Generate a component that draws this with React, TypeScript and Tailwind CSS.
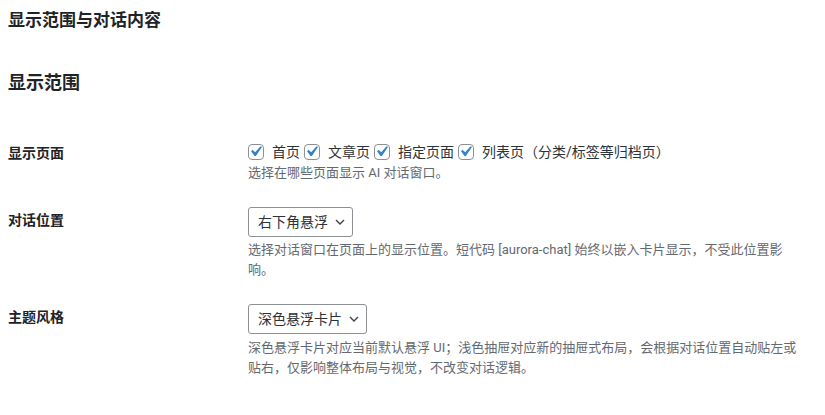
import React from "react";

const font = {
  fontFamily: '"Segoe UI", Roboto, "Noto Sans CJK SC", sans-serif',
};

function Check({ label }: { label: string }) {
  return (
    <label className="inline-flex items-center mr-[4px] text-[14px] leading-[22px] text-[#2c3338]">
      <span className="relative w-4 h-4 mr-[8px] shrink-0 rounded-[4px] border border-[#8c8f94] bg-white">
        <svg
          viewBox="0 0 20 20"
          className="absolute left-[-4px] top-[-4px] w-[21px] h-[21px]"
        >
          <path
            d="M14.83 4.89l1.34.94-5.81 8.38H9.02L5.78 9.67l1.34-1.25 2.57 2.4z"
            fill="#3582c4"
          />
        </svg>
      </span>
      {label}
    </label>
  );
}

function Select({ value }: { value: string }) {
  return (
    <div className="inline-flex items-center h-[30px] pl-[9px] pr-[7px] gap-[7px] rounded-[3px] border border-[#8c8f94] bg-white text-[14px] text-[#2c3338]">
      <span>{value}</span>
      <svg viewBox="0 0 10 6" className="w-[10px] h-[6px]">
        <path d="M1 1l4 4 4-4" fill="none" stroke="#3c434a" strokeWidth="1.4" />
      </svg>
    </div>
  );
}

function Row({
  label,
  children,
  labelOffset = "pt-[1px]",
}: {
  label: string;
  children: React.ReactNode;
  labelOffset?: string;
}) {
  return (
    <div className="flex py-3">
      <div
        className={`w-[240px] shrink-0 text-[14px] leading-[22px] font-bold text-[#1d2327] ${labelOffset}`}
      >
        {label}
      </div>
      <div className="w-[556px]">{children}</div>
    </div>
  );
}

export default function App() {
  return (
    <div className="min-h-screen bg-white pl-[8px]" style={font}>
      <h2 className="pt-[8px] text-[17px] leading-[24px] font-bold text-[#1d2327]">
        显示范围与对话内容
      </h2>
      <h3 className="mt-[39px] text-[18px] leading-[24px] font-bold text-[#1d2327]">
        显示范围
      </h3>

      <div className="mt-[34px]">
        <Row label="显示页面">
          <div className="flex items-center">
            <Check label="首页" />
            <Check label="文章页" />
            <Check label="指定页面" />
            <Check label="列表页（分类/标签等归档页）" />
          </div>
          <p className="text-[13px] leading-[20px] text-[#646970]">
            选择在哪些页面显示 AI 对话窗口。
          </p>
        </Row>

        <Row label="对话位置" labelOffset="pt-[2px]">
          <Select value="右下角悬浮" />
          <p className="mt-[3px] text-[13px] leading-[20px] text-[#646970]">
            选择对话窗口在页面上的显示位置。短代码 [aurora-chat] 始终以嵌入卡片显示，不受此位置影响。
          </p>
        </Row>

        <Row label="主题风格" labelOffset="pt-[2px]">
          <Select value="深色悬浮卡片" />
          <p className="mt-[4px] text-[13px] leading-[20px] text-[#646970]">
            深色悬浮卡片对应当前默认悬浮 UI；浅色抽屉对应新的抽屉式布局，会根据对话位置自动贴左或贴右，仅影响整体布局与视觉，不改变对话逻辑。
          </p>
        </Row>
      </div>
    </div>
  );
}
